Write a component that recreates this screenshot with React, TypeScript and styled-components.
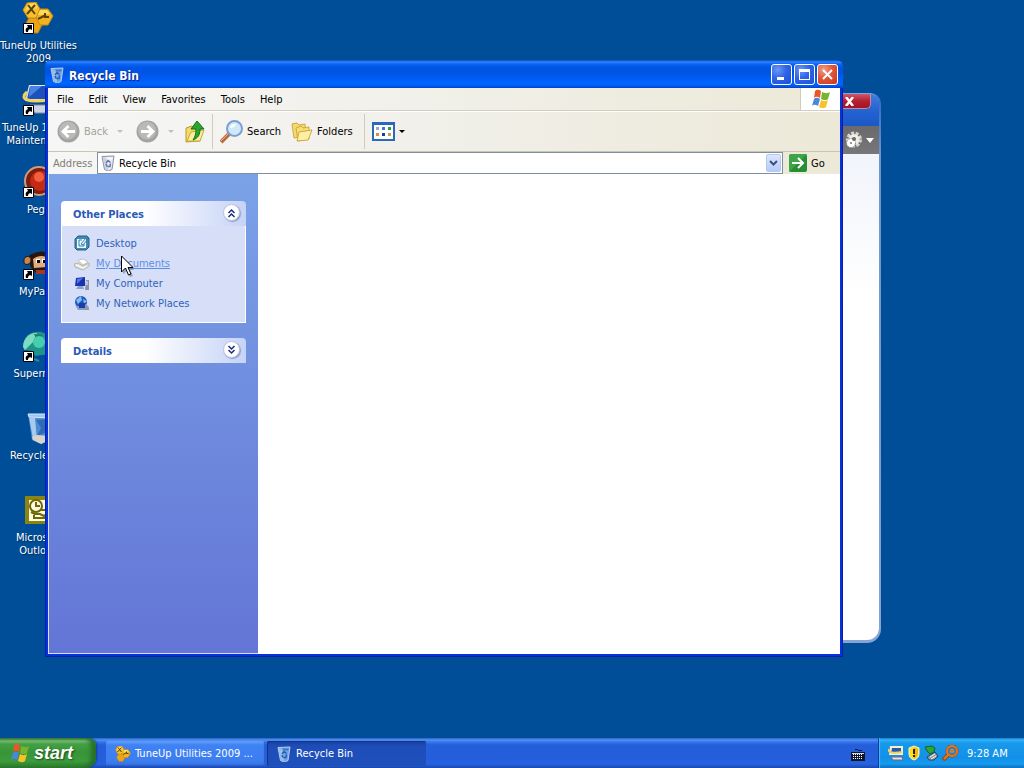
import React from "react";
import styled, { createGlobalStyle, css } from "styled-components";

const GlobalStyle = createGlobalStyle`
  * { box-sizing: border-box; }
  html, body, #root { height: 100%; margin: 0; }
  body {
    overflow: hidden;
    background: #004e98;
    font: 11px/13px "DejaVu Sans Condensed", "Noto Sans", sans-serif;
    color: #000;
  }
  button, input { font: inherit; color: inherit; margin: 0; padding: 0; border: 0; background: none; }
  a { color: inherit; text-decoration: none; }
  svg { display: block; flex: none; }
`;

/* ---------- Desktop ---------- */

const Screen = styled.div`
  height: 100vh;
  display: flex;
  flex-direction: column;
`;

const Desktop = styled.main`
  position: relative;
  flex: 1;
  min-height: 0;
  overflow: hidden;
`;

const Shortcuts = styled.nav`
  display: grid;
  grid-auto-rows: 82px;
  width: 76px;
  padding-top: 2px;
`;

const Shortcut = styled.a`
  display: flex;
  flex-direction: column;
  align-items: center;
  gap: 5px;
  color: #fff;
  text-align: center;
  text-shadow: 1px 1px 1px #00285a;
`;

const ShortcutLabel = styled.span`
  white-space: pre;
`;

/* ---------- Window behind ---------- */

const BackWindow = styled.section`
  position: absolute;
  top: 93px;
  right: 143px;
  bottom: 95px;
  left: 60px;
  display: flex;
  flex-direction: column;
  padding: 0 2px 3px;
  border-radius: 10px 10px 14px 14px;
  background: linear-gradient(#2a66c8, #6f94cc 60px, #86a4d6);
  overflow: hidden;
`;

const BackTitle = styled.header`
  display: flex;
  justify-content: flex-end;
  height: 33px;
  padding-right: 8px;
  border-top: 1px solid #7aa5ec;
  border-radius: 9px 9px 0 0;
  background: linear-gradient(#3f7cdc, #2262d0 18px, #1b58c6);
`;

const BackClose = styled.button`
  display: flex;
  align-items: center;
  justify-content: center;
  width: 44px;
  height: 15px;
  border: 1px solid #c98a9c;
  border-top: 0;
  border-radius: 0 0 5px 5px;
  background: linear-gradient(#d0586a, #b3202f 50%, #a51426);
`;

const BackToolbar = styled.div`
  display: flex;
  align-items: center;
  justify-content: flex-end;
  gap: 4px;
  height: 28px;
  padding-right: 5px;
  background: linear-gradient(#6a6a6c, #77777a);
`;

const BackBody = styled.div`
  flex: 1;
  border-radius: 0 0 12px 12px;
  background: linear-gradient(#f1f4fa, #fff 30%);
`;

/* ---------- Explorer window ---------- */

const ExplorerWindow = styled.section`
  position: absolute;
  top: 60px;
  right: 181px;
  bottom: 81px;
  left: 45px;
  display: flex;
  flex-direction: column;
  border-radius: 6px 6px 0 0;
  background: #0831d9;
  box-shadow: inset 0 0 0 1px #0420a8;
  overflow: hidden;
`;

const TitleBar = styled.header`
  display: flex;
  align-items: center;
  gap: 4px;
  height: 28px;
  padding: 1px 5px 0 4px;
  background: linear-gradient(
    #0a48c8 0, #2f86ff 2px, #0a66f2 4px, #0055e5 7px, #0054e3 12px,
    #005cf5 18px, #0066ff 24px, #0050e0 27px, #0040c8 28px
  );
`;

const Title = styled.h1`
  flex: 1;
  margin: 0;
  padding-top: 2px;
  font: bold 12px/16px "DejaVu Sans Condensed", "Noto Sans", sans-serif;
  color: #fff;
  text-shadow: 1px 1px 1px #0a1883;
`;

const CaptionButtons = styled.div`
  display: flex;
  gap: 2px;
`;

const CaptionButton = styled.button<{ $danger?: boolean }>`
  display: flex;
  align-items: center;
  justify-content: center;
  width: 21px;
  height: 21px;
  border: 1px solid #fff;
  border-radius: 3px;
  background: ${(p) =>
    p.$danger
      ? "radial-gradient(circle at 30% 25%, #f0a08a, #e0563a 45%, #c8381a)"
      : "radial-gradient(circle at 30% 25%, #6c98f4, #2f64e8 45%, #1c4fd8)"};
`;

const Client = styled.div`
  flex: 1;
  min-height: 0;
  display: flex;
  flex-direction: column;
  margin: 0 3px 3px;
  background: #fff;
`;

const barBackground = css`
  background: linear-gradient(90deg, #f6f6f6, #f1f0ea 45%, #ece9d8);
`;

const MenuBar = styled.nav`
  ${barBackground}
  display: flex;
  align-items: stretch;
  height: 23px;
  border-bottom: 1px solid #d0cdbd;
`;

const MenuItems = styled.div`
  flex: 1;
  display: flex;
  align-items: center;
  gap: 15px;
  padding-left: 9px;
`;

const BrandBox = styled.div`
  display: flex;
  align-items: center;
  justify-content: center;
  width: 40px;
  border-left: 1px solid #d0cdbd;
  background: #fff;
`;

const ToolBar = styled.div`
  ${barBackground}
  display: flex;
  align-items: center;
  height: 41px;
  padding-left: 9px;
  border-top: 1px solid #fff;
  border-bottom: 1px solid #c9c6b6;
`;

const ToolButton = styled.button<{ $width: number; $after?: number }>`
  display: flex;
  align-items: center;
  gap: 4px;
  width: ${(p) => p.$width}px;
  height: 30px;
  margin-right: ${(p) => p.$after ?? 0}px;
  white-space: nowrap;
  &:disabled { color: #a5a399; }
`;

const Caret = styled.span`
  margin-left: auto;
  border: 3px solid transparent;
  border-top-color: currentColor;
  border-bottom: 0;
  button:disabled & { border-top-color: #c2bfb3; }
`;

const Separator = styled.span<{ $after: number }>`
  width: 1px;
  height: 35px;
  margin-right: ${(p) => p.$after}px;
  background: #cfccbc;
`;

const AddressBar = styled.form`
  ${barBackground}
  display: flex;
  align-items: center;
  height: 22px;
  padding-left: 5px;
`;

const AddressLabel = styled.label`
  width: 44px;
  color: #7f7d73;
`;

const AddressField = styled.div`
  flex: 1;
  display: flex;
  align-items: center;
  gap: 3px;
  height: 22px;
  padding: 0 1px 0 2px;
  border: 1px solid #7f8f9f;
  background: #fff;
`;

const AddressInput = styled.input`
  flex: 1;
  min-width: 0;
  height: 18px;
  padding-top: 1px;
  outline: none;
`;

const DropButton = styled.button`
  display: flex;
  align-items: center;
  justify-content: center;
  width: 15px;
  height: 18px;
  border: 1px solid #b4c8f6;
  border-radius: 2px;
  background: linear-gradient(#dce6fe, #b6cbf8);
`;

const GoButton = styled.button`
  display: flex;
  align-items: center;
  gap: 4px;
  width: 57px;
  padding-left: 6px;
`;

const Content = styled.div`
  flex: 1;
  min-height: 0;
  display: flex;
`;

const Sidebar = styled.aside`
  display: flex;
  flex-direction: column;
  gap: 15px;
  width: 210px;
  padding: 27px 12px 0;
  border: solid #d6e0fa;
  border-width: 0 0 1px 1px;
  background: linear-gradient(#7ba2e7, #6375d6);
`;

const FileArea = styled.div`
  flex: 1;
  background: #fff;
`;

const PanelHeader = styled.header`
  display: flex;
  align-items: flex-start;
  justify-content: space-between;
  height: 25px;
  padding: 3px 6px 0 12px;
  border-radius: 4px 4px 0 0;
  background: linear-gradient(90deg, #fff 45%, #c6d3f7);
`;

const PanelTitle = styled.h2`
  margin: 0;
  padding-top: 4px;
  font: bold 11px/13px "DejaVu Sans Condensed", "Noto Sans", sans-serif;
  color: #2a59b8;
`;

const RoundButton = styled.button`
  display: flex;
  align-items: center;
  justify-content: center;
  width: 17px;
  height: 17px;
  border: 1px solid #b9c3e0;
  border-radius: 50%;
  background: #fff;
  box-shadow: 1px 1px 1px #8e9cc8;
`;

const Places = styled.ul`
  display: grid;
  grid-auto-rows: 20px;
  margin: 0;
  padding: 9px 12px 7px 12px;
  list-style: none;
  border: 1px solid #fff;
  border-top: 0;
  background: #d6dff7;
`;

const PlaceLink = styled.a<{ $hot?: boolean }>`
  display: flex;
  align-items: center;
  gap: 6px;
  color: ${(p) => (p.$hot ? "#5a8fe6" : "#2f62bd")};
  span { text-decoration: ${(p) => (p.$hot ? "underline" : "none")}; }
`;

const Pointer = styled.div`
  position: absolute;
  top: 255px;
  left: 120px;
`;

/* ---------- Taskbar ---------- */

const Taskbar = styled.footer`
  display: flex;
  height: 30px;
  background: linear-gradient(
    #2a5fc8 0, #4f93f7 2px, #3474ea 4px, #245edb 7px, #245edb 20px,
    #2663e0 26px, #1c47b0 30px
  );
`;

const StartButton = styled.button`
  display: flex;
  align-items: center;
  gap: 4px;
  width: 96px;
  margin-right: 10px;
  padding: 0 0 1px 10px;
  border-radius: 0 8px 10px 0;
  background: linear-gradient(
    #357f35 0, #7cc07a 3px, #43a043 6px, #379437 14px, #3c9c3c 23px, #2c7a2c 30px
  );
  box-shadow: inset -5px 0 5px #256f28, 1px 0 2px #153f96;
  color: #fff;
  font: italic bold 18px/24px "Liberation Sans", sans-serif;
  text-shadow: 1px 1px 2px #1d4a1d;
`;

const TaskButton = styled.button<{ $active?: boolean }>`
  display: flex;
  align-items: center;
  gap: 4px;
  width: 159px;
  height: 25px;
  margin: 3px 2px 0 0;
  padding: 0 9px;
  border-radius: 2px;
  color: #fff;
  white-space: nowrap;
  background: ${(p) =>
    p.$active
      ? "linear-gradient(#1841a0, #1e4db8 5px, #1e50bb)"
      : "linear-gradient(#64a0fb, #3f82f4 4px, #3c7df0 20px, #3371e0)"};
  box-shadow: ${(p) => (p.$active ? "inset 1px 1px 1px #123483" : "inset -1px -1px 1px #2b5fc9")};
`;

const LanguageButton = styled.button`
  display: flex;
  align-items: center;
  margin: 2px 13px 0 auto;
`;

const Tray = styled.div`
  display: flex;
  align-items: center;
  gap: 2px;
  width: 146px;
  padding: 0 0 0 9px;
  border-left: 1px solid #0c3f9a;
  box-shadow: inset 1px 0 1px #3fc0ff;
  background: linear-gradient(
    #0d74d0 0, #35b4f8 2px, #1899ec 5px, #1290e8 20px, #159bf0 26px, #0d68b8 30px
  );
  color: #fff;
`;

const Clock = styled.time`
  margin-left: 6px;
  white-space: nowrap;
`;

/* ---------- Drawings ---------- */

const ShortcutArrow = () => (
  <g>
    <path d="M1.500 21.500h10v10h-10z" fill="#fff" stroke="#000" />
    <path d="M5 23h5v5l-2-1c-2 1-2 2-2 3H4c-1-3 0-4 2-5z" fill="#000" />
  </g>
);

const HexTools = ({ size = 32, arrow = false }: { size?: number; arrow?: boolean }) => (
  <svg width={size} height={size} viewBox="0 0 32 32" aria-hidden="true">
    <path d="M7 16h8l5 7-4 8H8l-5-8z" fill="#e9a41c" stroke="#bd7d10" />
    <path d="M17 7h9l5 7-5 9h-8l-5-9z" fill="#f3b321" stroke="#c98a12" />
    <path d="M5 1l9-1 4 7-4 9H6L1 8z" fill="#f6bf2c" stroke="#c98a12" />
    <path d="M6 2l7-1 3 5-12 2zM18 8h7l3 4-12 1z" fill="#ffd95a" />
    <path d="M6 3l7 9M13 3l-8 9" stroke="#5c4208" strokeWidth="2" />
    <path d="M16 17l8-4M23 11v4h4" fill="none" stroke="#5c4208" strokeWidth="2" />
    {arrow && <ShortcutArrow />}
  </svg>
);

const LaptopIcon = () => (
  <svg width="32" height="32" viewBox="0 0 32 32" aria-hidden="true">
    <path d="M7 1h22v16H3z" fill="#e2e8f4" />
    <path d="M8 2h20v13H5z" fill="#1d52bd" />
    <path d="M8 2h12L7 13z" fill="#4b83e4" />
    <path d="M5 8c-8 7 0 11 23 8" fill="none" stroke="#f4d25a" strokeWidth="3" />
    <path d="M8 21h22l1 8H13z" fill="#cfd5e2" stroke="#7f8aa3" />
    <ShortcutArrow />
  </svg>
);

const RedBallIcon = () => (
  <svg width="32" height="32" viewBox="0 0 32 32" aria-hidden="true">
    <circle cx="17" cy="15" r="14" fill="#7e1d12" stroke="#d59a77" strokeWidth="2" />
    <circle cx="18" cy="15" r="10" fill="#c52a14" />
    <circle cx="17" cy="11" r="5" fill="#f2603c" />
    <ShortcutArrow />
  </svg>
);

const MonkeyIcon = () => (
  <svg width="32" height="32" viewBox="0 0 32 32" aria-hidden="true">
    <path d="M7 8c2-3 5-2 8-4 8-2 13 2 14 8l-2 13H14L8 18z" fill="#2a160c" />
    <path d="M2 11c2-4 7-3 7 1s-5 6-7 3z" fill="#c98550" stroke="#2a160c" />
    <path d="M11 11c5-4 13-4 15 0l-1 8-13 1z" fill="#e2ad7c" />
    <path d="M14 11h4v4h-4zM20 11h4v4h-4z" fill="#fff" />
    <path d="M15 12h3v3h-3zM21 12h2v3h-2z" fill="#000" />
    <path d="M14 22h12v4H14z" fill="#a33a22" />
    <ShortcutArrow />
  </svg>
);

const TealGlobeIcon = () => (
  <svg width="32" height="32" viewBox="0 0 32 32" aria-hidden="true">
    <path d="M2 20C-1 8 8 0 19 2c9 2 12 11 9 19-2 3-5 4-8 4l-7 1-2-5z" fill="#1f948b" />
    <path d="M1 17C1 8 8 2 15 3L11 12l-8 8z" fill="#7ddcc0" />
    <path d="M12 4l9 1-6 6z" fill="#1d7d70" />
    <circle cx="17" cy="12" r="6" fill="#45cfae" />
    <path d="M12 29l5 2" stroke="#1f948b" strokeWidth="2" />
    <ShortcutArrow />
  </svg>
);

const OutlookIcon = () => (
  <svg width="32" height="32" viewBox="0 0 32 32" aria-hidden="true">
    <path d="M3 2h28v28H3z" fill="#8b8510" />
    <path d="M7 6h22v21H7z" fill="#fffbe0" />
    <circle cx="14" cy="12" r="6" fill="#fffbe0" stroke="#6f6908" strokeWidth="2" />
    <path d="M14 8v4h4M9 18l4 2M18 16h9v8H12v-4h6l4 2 5-4" fill="none" stroke="#6f6908" strokeWidth="2" />
  </svg>
);

const BinIcon = ({ size = 16, pale = false }: { size?: number; pale?: boolean }) => (
  <svg width={size} height={size} viewBox="0 0 32 32" aria-hidden="true">
    <path d="M4 3l24-1-4 27-7 3-8-3z" fill={pale ? "#e5e9f2" : "#6fa3de"} stroke={pale ? "#8790a5" : "#b4cdec"} strokeWidth="2" />
    <path d="M6 5h20l-2 4H8z" fill={pale ? "#f9fafc" : "#3f78c8"} />
    <path d="M5 4l6 24 5 2-3-25z" fill={pale ? "#c3cada" : "#a9c8ec"} opacity="0.8" />
    <path d="M12 16l4-5 5 4M21 17l-1 6h-5M12 18l2 5" fill="none" stroke={pale ? "#6576a8" : "#1e5fc4"} strokeWidth="3" />
  </svg>
);

const BigBinIcon = () => (
  <svg width="32" height="32" viewBox="0 0 32 32" aria-hidden="true">
    <path d="M6 2h24l-3 26-8 4-9-4z" fill="#4f8bd0" />
    <path d="M6 2h24l-1 4-22-1z" fill="#9cc5ef" stroke="#d7eafc" />
    <path d="M7 5l4 22 4 2-2-23z" fill="#a7cbef" />
    <path d="M14 8l5 8-4 8 10-4 3-13z" fill="#2e6cb8" />
    <path d="M10 25l5-2 12 1-1 5-7 3-8-4z" fill="#d8d3cb" />
  </svg>
);

const Flag = ({ size }: { size: number }) => (
  <svg width={size} height={size} viewBox="0 0 20 20" aria-hidden="true">
    <path d="M4 2c2-2 4-1 6 0L9 9C7 8 5 7 3 9z" fill="#ea5626" />
    <path d="M11 3c3 1 5 2 8 0l-2 7c-2 2-5 1-7 0z" fill="#79b52c" />
    <path d="M3 10c2-2 4-1 6 0l-2 7c-2-1-4-2-6 0z" fill="#4a86e0" />
    <path d="M10 11c2 1 4 2 7 0l-2 7c-2 2-5 1-7 0z" fill="#f6c32b" />
  </svg>
);

const NavArrow = ({ forward = false }: { forward?: boolean }) => (
  <svg width="23" height="23" viewBox="0 0 23 23" aria-hidden="true">
    <circle cx="11.500" cy="11.500" r="11" fill="#a3a3a1" />
    <circle cx="11" cy="10.500" r="9" fill="#b9b9b7" />
    <path
      d={forward ? "M5 11.500h11M11.500 6l5.500 5.500-5.500 5.500" : "M18 11.500H7M11.500 6L6 11.500l5.500 5.500"}
      fill="none" stroke="#fff" strokeWidth="2.800"
    />
  </svg>
);

const UpFolder = () => (
  <svg width="20" height="23" viewBox="0 0 20 23" aria-hidden="true">
    <path d="M1 8l6-2 2 2 7-1-1 14-14 1z" fill="#f3da69" stroke="#bb9a28" />
    <path d="M2 21l4-9 13-2-4 11z" fill="#fbee9c" stroke="#c9a936" />
    <path d="M12 1l7 8h-4c0 6-2 9-7 11 2-3 3-6 3-11H6z" fill="#2ca52c" stroke="#12701a" />
  </svg>
);

const Magnifier = () => (
  <svg width="23" height="24" viewBox="0 0 23 24" aria-hidden="true">
    <path d="M9 14l-8 8" stroke="#bb6a3d" strokeWidth="4" />
    <path d="M8 14l-7 7" stroke="#eeb48c" strokeWidth="1" />
    <circle cx="14.500" cy="8.500" r="7.500" fill="#cfe9fb" stroke="#7c9fd2" strokeWidth="2" />
    <path d="M10 8c0-3 3-5 6-4-1 3-3 4-6 4z" fill="#fff" />
  </svg>
);

const FoldersGlyph = () => (
  <svg width="22" height="20" viewBox="0 0 22 20" aria-hidden="true">
    <path d="M1 2l5-1 2 2 6-1 1 12-12 2z" fill="#f4da70" stroke="#cfa93c" />
    <path d="M5 6l5-2 2 2 6-1v12l-11 2z" fill="#f6dd76" stroke="#cfa93c" />
    <path d="M6 19l2-9 13-2-4 10z" fill="#fdf0a5" stroke="#cfa93c" />
  </svg>
);

const ViewsGlyph = () => (
  <svg width="23" height="19" viewBox="0 0 23 19" aria-hidden="true">
    <path d="M1 1h21v17H1z" fill="#fff" stroke="#2b6ab8" strokeWidth="2" />
    <path d="M0 0h23v3H0z" fill="#2b66c0" />
    <path d="M4 5h3v3H4z" fill="#a6a0d8" />
    <path d="M10 5h3v3h-3z" fill="#3d7ad8" />
    <path d="M16 5h3v3h-3z" fill="#2f9c36" />
    <path d="M4 11h3v3H4z" fill="#de8a48" />
    <path d="M10 11h3v3h-3z" fill="#173f9f" />
    <path d="M16 11h3v3h-3z" fill="#c79b58" />
  </svg>
);

const GoGlyph = () => (
  <svg width="18" height="18" viewBox="0 0 18 18" aria-hidden="true">
    <rect width="18" height="18" rx="2" fill="#268f33" />
    <path d="M0 18V2l2-2h16z" fill="#3da546" />
    <path d="M3 9h11M9 4l5 5-5 5" fill="none" stroke="#fff" strokeWidth="2" />
  </svg>
);

const GearGlyph = () => (
  <svg width="17" height="18" viewBox="0 0 17 18" aria-hidden="true">
    <circle cx="9" cy="8.500" r="6.500" fill="none" stroke="#d9d6cc" strokeWidth="3" strokeDasharray="3 1.500" />
    <circle cx="9" cy="8.500" r="5.500" fill="#efede6" />
    <circle cx="6" cy="12" r="4.500" fill="#fff" stroke="#8a8984" strokeWidth="1" strokeDasharray="2 1" />
    <circle cx="9" cy="8" r="2" fill="#6a6a6c" />
    <circle cx="6" cy="12" r="1" fill="#77777a" />
  </svg>
);

const Chevrons = ({ down = false }: { down?: boolean }) => (
  <svg width="9" height="10" viewBox="0 0 9 10" aria-hidden="true">
    <path
      d={down ? "M1.500 1l3 3 3-3M1.500 5l3 3 3-3" : "M1.500 5l3-3 3 3M1.500 9l3-3 3 3"}
      fill="none" stroke="#1c2f78" strokeWidth="1.500"
    />
  </svg>
);

const DesktopGlyph = () => (
  <svg width="16" height="16" viewBox="0 0 16 16" aria-hidden="true">
    <path d="M1 4l3-3h9l2 2v9l-3 3H3l-2-2z" fill="#3d8bb4" stroke="#2b5f88" />
    <path d="M3 4h9v9H3z" fill="#f2f9fd" />
    <path d="M8 5H5v6h5V9M7 9l5-6 2 1-5 6z" fill="none" stroke="#2e7da9" />
  </svg>
);

const DocumentsGlyph = () => (
  <svg width="16" height="16" viewBox="0 0 16 16" aria-hidden="true">
    <path d="M4 5l5-1 5 3-5 3z" fill="#fff" stroke="#c4c5c0" />
    <path d="M0 9l4-1 5 3 6-3v3l-6 4-8-3z" fill="#e3e1d8" stroke="#b4b3ac" />
    <path d="M2 10l7 3 4-2" fill="none" stroke="#fff" />
  </svg>
);

const ComputerGlyph = () => (
  <svg width="16" height="16" viewBox="0 0 16 16" aria-hidden="true">
    <path d="M2 3l9-1v9H1z" fill="#1733b0" />
    <path d="M3 4l6-1-6 6z" fill="#5477e6" />
    <path d="M4 11h5l1 3H2z" fill="#8fa0cc" />
    <path d="M12 5h3v10h-4z" fill="#8b93ac" />
    <path d="M12 7h2M12 9h2" stroke="#eef" />
  </svg>
);

const NetworkGlyph = () => (
  <svg width="16" height="16" viewBox="0 0 16 16" aria-hidden="true">
    <circle cx="7" cy="7" r="6" fill="#1f56c0" />
    <path d="M2 5l5-4 1 4-4 4zM9 4l4 2-3 3z" fill="#82bdf2" />
    <path d="M1 10l6 2 5-3 3 3-2 3H4z" fill="#8b9cc4" />
    <path d="M5 8h6v5H5z" fill="#1b3ea8" />
    <path d="M11 14h4" stroke="#9a9a90" strokeWidth="2" />
  </svg>
);

const KeyboardGlyph = () => (
  <svg width="14" height="13" viewBox="0 0 14 13" aria-hidden="true">
    <path d="M4 1.500h3M7 2.500h4" stroke="#10162e" />
    <path d="M0 4h14v9H0z" fill="#10162e" />
    <path d="M2 6.500h10M2 8.500h10M2 10.500h10" stroke="#fff" strokeDasharray="1 1" />
    <path d="M1 5.500h12" stroke="#c8d4ee" />
  </svg>
);

const TrayLaptop = () => (
  <svg width="16" height="16" viewBox="0 0 16 16" aria-hidden="true">
    <path d="M2 1h13v9H1z" fill="#f3efd0" />
    <path d="M4 3h9v5H3z" fill="#2c58ae" />
    <path d="M0 4c1 5 9 4 14 3" fill="none" stroke="#f3d25b" strokeWidth="2" />
    <path d="M3 12h11l1 3H5z" fill="#e6e3da" stroke="#686c7a" />
  </svg>
);

const TrayShield = () => (
  <svg width="16" height="16" viewBox="0 0 16 16" aria-hidden="true">
    <path d="M8 1l5 2v6c0 3-2 5-5 6-3-1-5-3-5-6V3z" fill="#ffdd1f" stroke="#f7f2d4" />
    <path d="M8 2l4 2v4c0 3-2 5-4 6z" fill="#efb90c" />
    <path d="M8 4v5M8 10v2" stroke="#2a2205" strokeWidth="2" />
  </svg>
);

const TraySafeRemove = () => (
  <svg width="16" height="16" viewBox="0 0 16 16" aria-hidden="true">
    <path d="M1 2l7-1 3 2-1 4-4 2-3-3z" fill="#2ba53a" stroke="#10652a" />
    <path d="M3 12l8-5 3 4-4 4H5z" fill="#8d9ba4" stroke="#2f4654" />
    <path d="M6 12l5-3M7 14l5-3" stroke="#eef4f4" />
  </svg>
);

const TrayKey = () => (
  <svg width="17" height="16" viewBox="0 0 17 16" aria-hidden="true">
    <circle cx="10" cy="6" r="5" fill="none" stroke="#9a480e" strokeWidth="3" />
    <path d="M7 9l-6 6" stroke="#9a480e" strokeWidth="4" />
    <circle cx="10" cy="6" r="5" fill="none" stroke="#e8781e" strokeWidth="2" />
    <path d="M7 9l-5 5" stroke="#e8781e" strokeWidth="2" />
    <circle cx="10" cy="6" r="2" fill="#e8781e" />
  </svg>
);

/* ---------- Data ---------- */

const shortcuts = [
  { label: "TuneUp Utilities\n2009", icon: <HexTools arrow /> },
  { label: "TuneUp 1-Click\nMaintenance", icon: <LaptopIcon /> },
  { label: "Pegs", icon: <RedBallIcon /> },
  { label: "MyPaint", icon: <MonkeyIcon /> },
  { label: "Supermail", icon: <TealGlobeIcon /> },
  { label: "Recycle Bin", icon: <BigBinIcon /> },
  { label: "Microsoft\nOutlook", icon: <OutlookIcon /> },
];

const menus = ["File", "Edit", "View", "Favorites", "Tools", "Help"];

const places = [
  { label: "Desktop", icon: <DesktopGlyph /> },
  { label: "My Documents", icon: <DocumentsGlyph />, hot: true },
  { label: "My Computer", icon: <ComputerGlyph /> },
  { label: "My Network Places", icon: <NetworkGlyph /> },
];

export default function App() {
  return (
    <Screen>
      <GlobalStyle />
      <Desktop>
        <Shortcuts aria-label="Desktop">
          {shortcuts.map((s) => (
            <Shortcut key={s.label} href="#">
              {s.icon}
              <ShortcutLabel>{s.label}</ShortcutLabel>
            </Shortcut>
          ))}
        </Shortcuts>

        <BackWindow aria-label="TuneUp Utilities 2009">
          <BackTitle>
            <BackClose aria-label="Close TuneUp Utilities">
              <svg width="11" height="9" viewBox="0 0 11 9" aria-hidden="true">
                <path d="M2 0l7 9M9 0L2 9" stroke="#fff" strokeWidth="2.500" />
              </svg>
            </BackClose>
          </BackTitle>
          <BackToolbar>
            <GearGlyph />
            <svg width="8" height="5" viewBox="0 0 8 5" aria-hidden="true">
              <path d="M0 0h8L4 5z" fill="#fff" />
            </svg>
          </BackToolbar>
          <BackBody />
        </BackWindow>

        <ExplorerWindow aria-label="Recycle Bin">
          <TitleBar>
            <BinIcon />
            <Title>Recycle Bin</Title>
            <CaptionButtons>
              <CaptionButton aria-label="Minimize">
                <svg width="13" height="13" viewBox="0 0 13 13" aria-hidden="true">
                  <path d="M2 9h7v3H2z" fill="#fff" />
                </svg>
              </CaptionButton>
              <CaptionButton aria-label="Maximize">
                <svg width="13" height="13" viewBox="0 0 13 13" aria-hidden="true">
                  <path d="M1 1h11v11H1zM2 4v7h9V4z" fill="#fff" fillRule="evenodd" />
                </svg>
              </CaptionButton>
              <CaptionButton aria-label="Close" $danger>
                <svg width="13" height="13" viewBox="0 0 13 13" aria-hidden="true">
                  <path d="M2 2l9 9M11 2l-9 9" stroke="#fff" strokeWidth="2" />
                </svg>
              </CaptionButton>
            </CaptionButtons>
          </TitleBar>

          <Client>
            <MenuBar>
              <MenuItems>
                {menus.map((m) => (
                  <button key={m}>{m}</button>
                ))}
              </MenuItems>
              <BrandBox>
                <Flag size={20} />
              </BrandBox>
            </MenuBar>

            <ToolBar role="toolbar">
              <ToolButton $width={66} $after={13} disabled>
                <NavArrow />
                Back
                <Caret />
              </ToolButton>
              <ToolButton $width={38} $after={11} disabled aria-label="Forward">
                <NavArrow forward />
                <Caret />
              </ToolButton>
              <ToolButton $width={20} $after={7} aria-label="Up">
                <UpFolder />
              </ToolButton>
              <Separator $after={7} />
              <ToolButton $width={60} $after={11}>
                <Magnifier />
                Search
              </ToolButton>
              <ToolButton $width={62} $after={11}>
                <FoldersGlyph />
                Folders
              </ToolButton>
              <Separator $after={7} />
              <ToolButton $width={31} aria-label="Views">
                <ViewsGlyph />
                <Caret />
              </ToolButton>
            </ToolBar>

            <AddressBar onSubmit={(e) => e.preventDefault()}>
              <AddressLabel htmlFor="address">Address</AddressLabel>
              <AddressField>
                <BinIcon pale />
                <AddressInput id="address" defaultValue="Recycle Bin" />
                <DropButton type="button" aria-label="Show addresses">
                  <svg width="9" height="6" viewBox="0 0 9 6" aria-hidden="true">
                    <path d="M1 1l3.500 3.500L8 1" fill="none" stroke="#3c4f80" strokeWidth="2" />
                  </svg>
                </DropButton>
              </AddressField>
              <GoButton>
                <GoGlyph />
                Go
              </GoButton>
            </AddressBar>

            <Content>
              <Sidebar>
                <section>
                  <PanelHeader>
                    <PanelTitle>Other Places</PanelTitle>
                    <RoundButton aria-label="Collapse Other Places">
                      <Chevrons />
                    </RoundButton>
                  </PanelHeader>
                  <Places>
                    {places.map((p) => (
                      <li key={p.label}>
                        <PlaceLink href="#" $hot={p.hot}>
                          {p.icon}
                          <span>{p.label}</span>
                        </PlaceLink>
                      </li>
                    ))}
                  </Places>
                </section>
                <section>
                  <PanelHeader>
                    <PanelTitle>Details</PanelTitle>
                    <RoundButton aria-label="Expand Details">
                      <Chevrons down />
                    </RoundButton>
                  </PanelHeader>
                </section>
              </Sidebar>
              <FileArea />
            </Content>
          </Client>
        </ExplorerWindow>

        <Pointer>
          <svg width="15" height="23" viewBox="0 0 15 23" aria-hidden="true">
            <path d="M3 3v16l4-3 3 6 3-1-3-6h4z" fill="#5a6a94" opacity="0.5" />
            <path d="M1.500 1v16l4-4 3 7 2.500-1-3-6.500h5z" fill="#fff" stroke="#000" />
          </svg>
        </Pointer>
      </Desktop>

      <Taskbar>
        <StartButton>
          <Flag size={20} />
          start
        </StartButton>
        <TaskButton>
          <HexTools size={16} />
          TuneUp Utilities 2009 ...
        </TaskButton>
        <TaskButton $active>
          <BinIcon />
          Recycle Bin
        </TaskButton>
        <LanguageButton aria-label="Keyboard layout">
          <KeyboardGlyph />
        </LanguageButton>
        <Tray>
          <TrayLaptop />
          <TrayShield />
          <TraySafeRemove />
          <TrayKey />
          <Clock>9:28 AM</Clock>
        </Tray>
      </Taskbar>
    </Screen>
  );
}
